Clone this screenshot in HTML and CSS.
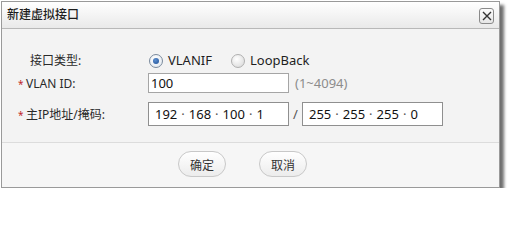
FILE: index.html
```html
<!DOCTYPE html>
<html>
<head>
<meta charset="utf-8">
<link rel="stylesheet" href="styles.css">
</head>
<body>
<div class="dialog">
  <div class="titlebar">
    <span class="title">新建虚拟接口</span>
    <span class="close"><svg width="10" height="10" viewBox="0 0 10 10"><path d="M1 1L9 9M9 1L1 9" stroke="#333" stroke-width="1.4" fill="none"/></svg></span>
  </div>
  <div class="content">
    <div class="row r1">
      <div class="label plain">接口类型:</div>
      <div class="value">
        <span class="radio checked"><span class="dot"></span></span><span class="rtext">VLANIF</span>
        <span class="radio"></span><span class="rtext">LoopBack</span>
      </div>
    </div>
    <div class="row r2">
      <div class="label"><span class="star">*</span>VLAN ID:</div>
      <div class="value">
        <div class="input vlan">100</div>
        <span class="hint">(1~4094)</span>
      </div>
    </div>
    <div class="row r3">
      <div class="label"><span class="star">*</span>主IP地址/掩码:</div>
      <div class="value">
        <div class="ipbox"><span>192</span><span class="sep">·</span><span>168</span><span class="sep">·</span><span>100</span><span class="sep">·</span><span>1</span></div>
        <span class="slash">/</span>
        <div class="ipbox"><span>255</span><span class="sep">·</span><span>255</span><span class="sep">·</span><span>255</span><span class="sep">·</span><span>0</span></div>
      </div>
    </div>
  </div>
  <div class="footer">
    <button class="btn">确定</button>
    <button class="btn">取消</button>
  </div>
</div>
</body>
</html>
```
FILE: styles.css
```css
html, body {
  margin: 0;
  padding: 0;
  background: #ffffff;
}
body {
  font-family: "Noto Sans", "Noto Sans CJK SC", sans-serif;
  color: #333;
}
.dialog {
  margin: 1px 0 0 1px;
  width: 497px;
  height: 185px;
  border: 1px solid #9a9a9a;
  background: #f3f3f3;
  box-shadow: 4px 4px 3px #6f6f6f;
  display: flex;
  flex-direction: column;
}
.titlebar {
  height: 26px;
  border-bottom: 1px solid #b8b8b8;
  background: linear-gradient(#ffffff, #e9e9e9);
  display: flex;
  align-items: center;
  justify-content: space-between;
  padding: 0 5px 0 5px;
}
.title {
  font-size: 12px;
  color: #1e1e1e;
  line-height: 16px;
  font-weight: 500;
}
.close {
  width: 13px;
  height: 14px;
  border: 1px solid #8a8a8a;
  border-radius: 3px;
  background: linear-gradient(#fcfcfc, #e6e6e6);
  display: flex;
  align-items: center;
  justify-content: center;
  margin-top: 2px;
}
.content {
  padding: 20px 0 0 0;
  height: 93px;
  border-bottom: 1px solid #dcdcdc;
  display: flex;
  flex-direction: column;
}
.row {
  display: flex;
  align-items: center;
}
.r1 { height: 22px; }
.r2 { height: 20px; margin-top: 2px; }
.r3 { height: 24px; margin-top: 9px; }
.label {
  width: 130px;
  padding-left: 16px;
  font-size: 12px;
  color: #2a2a2a;
  display: flex;
  align-items: center;
}
.label.plain {
  padding-left: 28px;
  width: 118px;
}
.star {
  color: #c0282a;
  width: 8px;
  font-size: 10px;
  display: inline-block;
  margin-top: 2px;
}
.value {
  display: flex;
  align-items: center;
  font-size: 13px;
}
.radio {
  width: 12px;
  height: 12px;
  border: 1px solid #b0b0b0;
  border-radius: 50%;
  background: radial-gradient(circle at 40% 35%, #ffffff, #d6d6d6);
  display: inline-flex;
  align-items: center;
  justify-content: center;
  margin-left: 1px;
  margin-top: 1px;
}
.radio.checked {
  border-color: #7a8a9c;
  background: radial-gradient(circle at 40% 35%, #ffffff, #dfe6ee);
}
.dot {
  width: 6px;
  height: 6px;
  border-radius: 50%;
  background: radial-gradient(circle at 40% 35%, #5d8fd0, #1d4f95);
}
.rtext {
  margin-left: 5px;
  margin-right: 18px;
  color: #1e1e1e;
  font-size: 13px;
}
.input {
  box-sizing: border-box;
  height: 20px;
  border: 1px solid #a5a5a5;
  background: #fff;
  font-size: 13px;
  line-height: 18px;
  padding-left: 2px;
  color: #111;
}
.vlan {
  width: 141px;
}
.hint {
  margin-left: 6px;
  color: #8c8c8c;
  font-size: 13px;
}
.ipbox {
  box-sizing: border-box;
  width: 141px;
  height: 24px;
  border: 1px solid #8f8f8f;
  background: #fff;
  display: flex;
  align-items: center;
  padding-left: 6px;
  font-size: 13px;
  color: #111;
}
.sep {
  padding: 0 4px;
  color: #555;
}
.slash {
  width: 13px;
  text-align: center;
  color: #555;
  font-size: 13px;
}
.footer {
  flex: 1;
  background: #f6f6f6;
  display: flex;
  justify-content: flex-start;
  align-items: flex-start;
  padding: 8px 0 0 176px;
  gap: 33px;
}
.btn {
  width: 48px;
  height: 26px;
  border: 1px solid #c8c8c8;
  border-radius: 13px;
  background: linear-gradient(#ffffff, #ececec);
  font-family: "Noto Sans CJK SC", sans-serif;
  font-size: 12px;
  color: #333;
  padding: 0;
}
```
